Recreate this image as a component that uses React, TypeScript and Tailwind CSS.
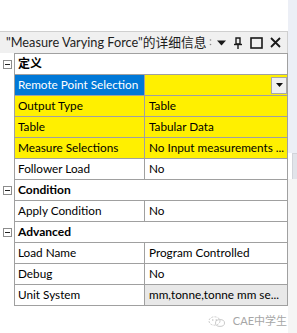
import React from 'react'

type Row =
  | { kind: 'section'; label: string }
  | { kind: 'prop'; label: string; value: string; yellow?: boolean; selected?: boolean; dropdown?: boolean; disabled?: boolean }

const rows: Row[] = [
  { kind: 'section', label: '定义' },
  { kind: 'prop', label: 'Remote Point Selection', value: '', yellow: true, selected: true, dropdown: true },
  { kind: 'prop', label: 'Output Type', value: 'Table', yellow: true },
  { kind: 'prop', label: 'Table', value: 'Tabular Data', yellow: true },
  { kind: 'prop', label: 'Measure Selections', value: 'No Input measurements ...', yellow: true },
  { kind: 'prop', label: 'Follower Load', value: 'No' },
  { kind: 'section', label: 'Condition' },
  { kind: 'prop', label: 'Apply Condition', value: 'No' },
  { kind: 'section', label: 'Advanced' },
  { kind: 'prop', label: 'Load Name', value: 'Program Controlled' },
  { kind: 'prop', label: 'Debug', value: 'No' },
  { kind: 'prop', label: 'Unit System', value: 'mm,tonne,tonne mm se...', disabled: true },
]

function MinusBox() {
  return (
    <div className="w-[9px] h-[9px] border border-[#8c8c8c] bg-white flex items-center justify-center">
      <div className="w-[5px] h-px bg-[#222]" />
    </div>
  )
}

function HeaderIcons() {
  return (
    <div className="flex items-center gap-[5px] pr-[6px]">
      <svg width="3" height="9" viewBox="0 0 3 9"><circle cx="1.5" cy="2" r="0.8" fill="#8a8a8a" /><circle cx="1.5" cy="6.5" r="0.8" fill="#8a8a8a" /></svg>
      <svg width="9" height="6" viewBox="0 0 9 6"><path d="M0 0.5 H9 L4.5 5.5 Z" fill="#1a1a1a" /></svg>
      <svg width="10" height="12" viewBox="0 0 10 12" className="ml-[2px]">
        <path d="M3 1 H7 V7 H3 Z" fill="none" stroke="#1a1a1a" strokeWidth="1.4" />
        <path d="M1 7.5 H9" stroke="#1a1a1a" strokeWidth="1.4" />
        <path d="M5 8 V12" stroke="#1a1a1a" strokeWidth="1.4" />
      </svg>
      <svg width="13" height="12" viewBox="0 0 13 12" className="ml-[2px]">
        <rect x="1" y="1" width="11" height="10" fill="none" stroke="#1a1a1a" strokeWidth="1.6" />
      </svg>
      <svg width="11" height="11" viewBox="0 0 11 11" className="ml-[2px]">
        <path d="M1 1 L10 10 M10 1 L1 10" stroke="#1a1a1a" strokeWidth="1.8" />
      </svg>
    </div>
  )
}

function DropButton() {
  return (
    <div className="w-[16px] h-[17px] border border-[#a8a8a8] bg-[#f0f0f0] flex items-center justify-center">
      <svg width="7" height="4" viewBox="0 0 7 4"><path d="M0 0 H7 L3.5 4 Z" fill="#111" /></svg>
    </div>
  )
}

function WeChatMark() {
  return (
    <svg width="18" height="11" viewBox="0 0 18 11">
      <ellipse cx="6.5" cy="5" rx="5.5" ry="4.2" fill="none" stroke="#c4c4c4" strokeWidth="0.9" strokeDasharray="2 1.2" />
      <ellipse cx="12" cy="7" rx="4.5" ry="3.4" fill="none" stroke="#c4c4c4" strokeWidth="0.9" />
      <circle cx="4.8" cy="4" r="0.7" fill="#b8b8b8" />
      <circle cx="8.2" cy="4" r="0.7" fill="#b8b8b8" />
    </svg>
  )
}

export default function App() {
  return (
    <div
      className="w-[297px] h-[333px] bg-white flex overflow-hidden text-[11.75px] text-black"
      style={{ fontFamily: 'Lato, "Noto Sans CJK SC", sans-serif' }}
    >
      <div className="w-[288px] flex flex-col">
        <div className="h-[31px]" />
        <div className="h-[22px] bg-[#f0f0f0] border-t border-r border-[#cfcfcf] flex items-center justify-between">
          <div className="pl-[6px] text-[12.75px] text-[#1e1e1e] whitespace-nowrap leading-none">
            "Measure Varying Force"的详细信息
          </div>
          <HeaderIcons />
        </div>
        <div className="flex">
          <div className="w-[14px] flex flex-col pt-px">
            {rows.map((r, i) => (
              <div key={i} className="h-[21px] flex items-center pl-[3px]">
                {r.kind === 'section' && <MinusBox />}
              </div>
            ))}
          </div>
          <div className="w-[274px] border-l border-t border-[#a0a0a0] flex flex-col">
            {rows.map((r, i) =>
              r.kind === 'section' ? (
                <div key={i} className="h-[21px] border-b border-r border-[#a0a0a0] flex items-center pl-[3px] font-bold text-[12px]">
                  {r.label}
                </div>
              ) : (
                <div key={i} className="h-[21px] flex border-b border-[#a0a0a0]">
                  <div
                    className={
                      'w-[130px] border-r border-[#a0a0a0] flex items-center pl-[3px] whitespace-nowrap overflow-hidden ' +
                      (r.selected ? 'bg-[#0078d7] text-white' : r.yellow ? 'bg-[#fff000]' : 'bg-white')
                    }
                  >
                    {r.label}
                  </div>
                  <div
                    className={
                      'w-[143px] border-r border-[#a0a0a0] flex items-center justify-between pl-[4px] whitespace-nowrap overflow-hidden ' +
                      (r.yellow ? 'bg-[#fff000]' : r.disabled ? 'bg-[#e8e8e8]' : 'bg-white')
                    }
                  >
                    <span>{r.value}</span>
                    {r.dropdown && <DropButton />}
                  </div>
                </div>
              )
            )}
          </div>
        </div>
        <div className="flex items-center justify-end gap-[7px] pr-[1px] pt-[7px] text-[11px] text-[#a6a6a6]">
          <WeChatMark />
          <span>CAE中学生</span>
        </div>
      </div>
      <div className="w-[9px] flex flex-col">
        <div className="h-[153px] bg-[#eceff6]" />
        <div className="h-[26px] bg-[#e2e4ea] border-l border-t border-[#d2d4da] ml-[4px]" />
        <div className="flex-1 bg-[#f5f5f5]" />
      </div>
    </div>
  )
}
